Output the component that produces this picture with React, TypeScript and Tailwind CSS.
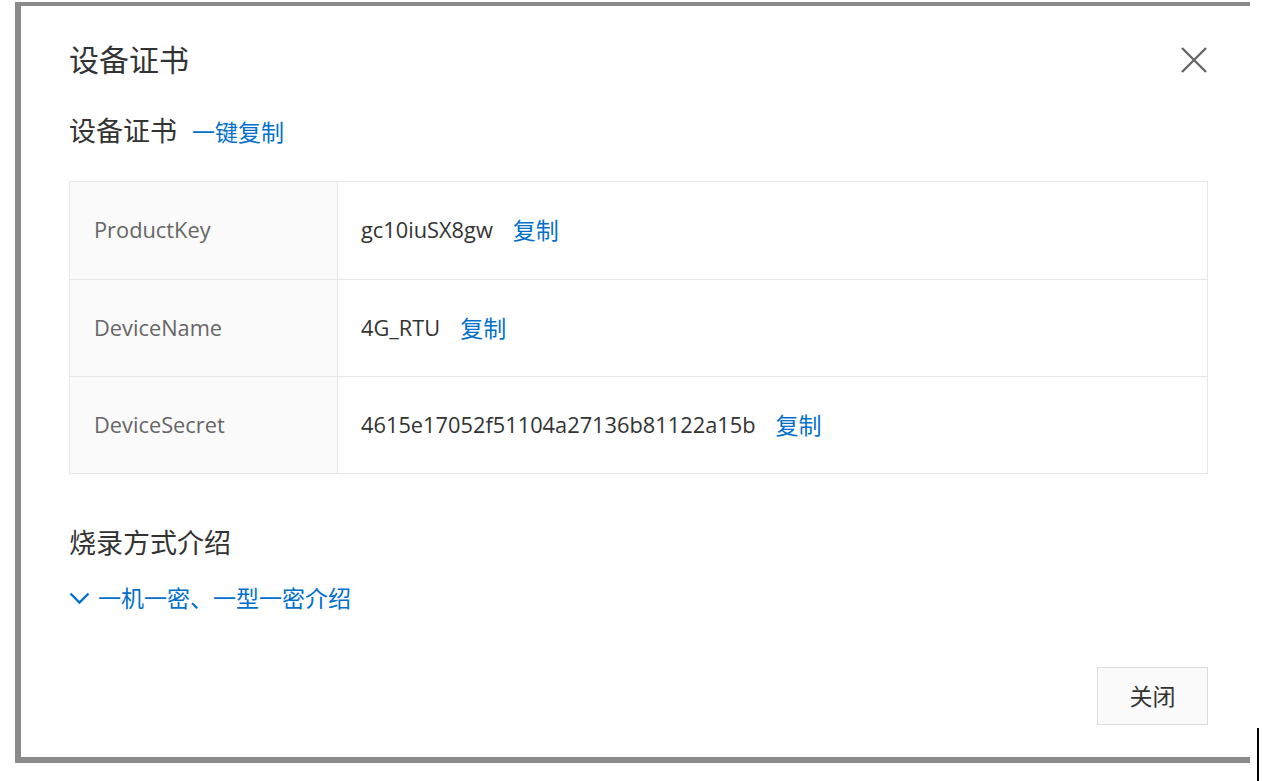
const rows = [
  { label: 'ProductKey', value: 'gc10iuSX8gw' },
  { label: 'DeviceName', value: '4G_RTU' },
  { label: 'DeviceSecret', value: '4615e17052f51104a27136b81122a15b' },
];

const font = { fontFamily: '"Open Sans", "Noto Sans CJK SC", sans-serif' };

export default function App() {
  return (
    <div className="relative w-[1273px] h-[781px] bg-white overflow-hidden" style={font}>
      {/* dialog frame */}
      <div className="ml-[15px] mt-[2px] w-[1235px] h-[761px] border-l-[6px] border-t-4 border-b-[6px] border-[#8a8a8a] bg-white">
        <div className="pl-[48px] pr-[42px] pt-[34px]">
          {/* header */}
          <div className="flex items-center justify-between h-[40px]">
            <h1 className="text-[30px] leading-[40px] text-[#333]">设备证书</h1>
            <button className="w-[28px] h-[28px] flex items-center justify-center">
              <svg width="28" height="28" viewBox="0 0 28 28" fill="none">
                <path d="M2 2 L26 26 M26 2 L2 26" stroke="#666" strokeWidth="2.4" />
              </svg>
            </button>
          </div>

          {/* section title */}
          <div className="mt-[33px] flex items-baseline gap-[15px] h-[36px]">
            <span className="text-[27px] leading-[36px] text-[#333]">设备证书</span>
            <a className="text-[23px] leading-[36px] text-[#0070cc] cursor-pointer">一键复制</a>
          </div>

          {/* credentials table */}
          <div className="mt-[32px] border border-[#e8e8e8] text-[21.8px]">
            {rows.map((row, i) => (
              <div key={row.label} className={`flex h-[97px] ${i > 0 ? 'border-t border-[#e8e8e8]' : ''}`}>
                <div className="w-[268px] shrink-0 bg-[#fafafa] border-r border-[#e8e8e8] pl-[24px] flex items-center text-[#666]">
                  {row.label}
                </div>
                <div className="flex-1 pl-[23px] flex items-center gap-[20px] text-[#333]">
                  <span>{row.value}</span>
                  <a className="text-[23px] text-[#0070cc] cursor-pointer">复制</a>
                </div>
              </div>
            ))}
          </div>

          {/* burn mode */}
          <h2 className="mt-[51px] text-[27px] leading-[36px] text-[#333]">烧录方式介绍</h2>
          <a className="mt-[22px] flex items-center gap-[8px] text-[23px] leading-[30px] text-[#0070cc] cursor-pointer">
            <svg width="21" height="13" viewBox="0 0 21 13" fill="none">
              <path d="M1.5 1.5 L10.5 10.5 L19.5 1.5" stroke="#0070cc" strokeWidth="2.4" />
            </svg>
            <span>一机一密、一型一密介绍</span>
          </a>

          {/* footer */}
          <div className="mt-[54px] flex justify-end">
            <button className="w-[111px] h-[58px] border border-[#dcdcdc] bg-[#fafafa] text-[23px] text-[#333]">
              关闭
            </button>
          </div>
        </div>
      </div>

      {/* cursor line */}
      <div className="absolute left-[1257px] top-[728px] w-[2px] h-[53px] bg-black" />
    </div>
  );
}
